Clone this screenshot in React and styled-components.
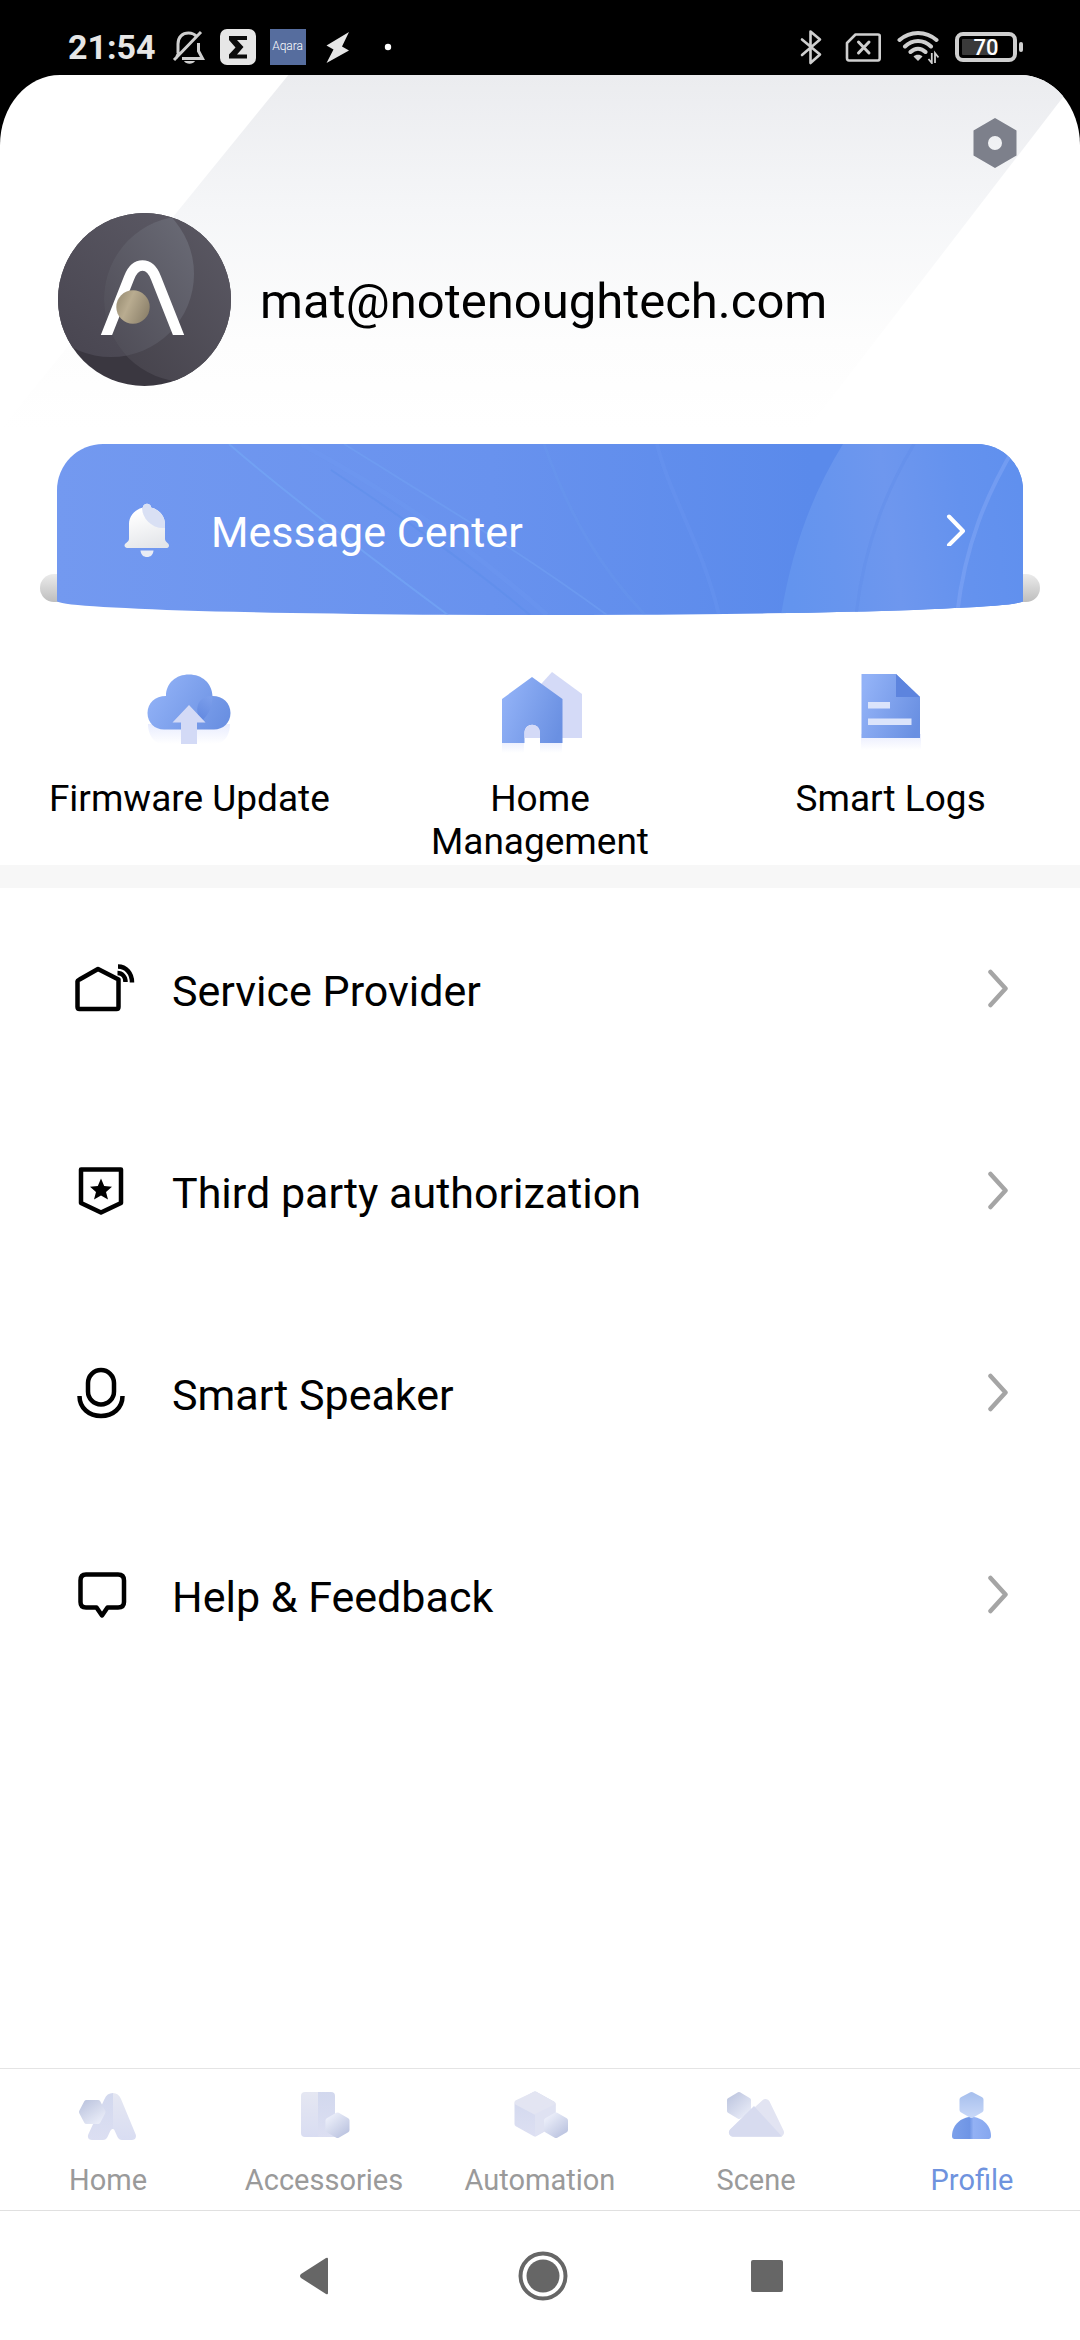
import React from 'react';
import styled, { createGlobalStyle } from 'styled-components';

const menus = [
    { id: "provider", text: "Service Provider", icon: <ProviderIcon /> },
    { id: "third", text: "Third party authorization", icon: <ShieldIcon /> },
    { id: "speaker", text: "Smart Speaker", icon: <MicIcon /> },
    { id: "help", text: "Help & Feedback", icon: <BubbleIcon /> },
];

const shortcuts = [
    { id: "firmware", text: "Firmware Update", icon: <CloudIcon /> },
    { id: "home", text: "Home Management", icon: <HousesIcon /> },
    { id: "logs", text: "Smart Logs", icon: <LogsIcon /> },
];

const tabs = [
    { id: "home", text: "Home", icon: <TabHome /> },
    { id: "accessories", text: "Accessories", icon: <TabAccessories /> },
    { id: "automation", text: "Automation", icon: <TabAutomation /> },
    { id: "scene", text: "Scene", icon: <TabScene /> },
    { id: "profile", text: "Profile", icon: <TabProfile /> },
];

const App = () => {
    const [tab, setTab] = React.useState("profile");

    return (
        <Page>
            <GlobalStyle />
            <StatusBar />
            <Sheet>
                <Header>
                    <SettingsButton aria-label="Settings">
                        <svg width="44" height="50" viewBox="0 0 44 50">
                            <path fill="#7d808b" fillRule="evenodd" d="M22 0L43.500 12.500V37.500L22 50L.5 37.500V12.500ZM22 18a7 7 0 1 0 0 14a7 7 0 1 0 0-14Z" />
                        </svg>
                    </SettingsButton>
                    <Account>
                        <Avatar />
                        <Email>mat@notenoughtech.com</Email>
                    </Account>
                </Header>

                <Banner>
                    <MessageCard href="#messages">
                        <CardArt />
                        <BellIcon />
                        <RowText>Message Center</RowText>
                        <svg width="20" height="32" viewBox="0 0 20 32" fill="none" stroke="#fff" strokeWidth="4" strokeLinecap="round" strokeLinejoin="round">
                            <path d="M3 2.500L17 17L3 31" />
                        </svg>
                    </MessageCard>
                </Banner>

                <Shortcuts>
                    {shortcuts.map((s) => (
                        <Shortcut key={s.id} href={"#" + s.id}>
                            {s.icon}
                            <span>{s.text}</span>
                        </Shortcut>
                    ))}
                </Shortcuts>

                <MenuList>
                    {menus.map((m) => (
                        <li key={m.id}>
                            <MenuLink href={"#" + m.id}>
                                {m.icon}
                                <RowText>{m.text}</RowText>
                                <svg width="22" height="40" viewBox="0 0 22 40" fill="none" stroke="#a5a5a5" strokeWidth="4.500" strokeLinecap="round" strokeLinejoin="round">
                                    <path d="M4.500 3L19.500 19.500L4.500 36" />
                                </svg>
                            </MenuLink>
                        </li>
                    ))}
                </MenuList>

                <TabBar>
                    {tabs.map((t) => (
                        <TabButton key={t.id} $active={t.id === tab} onClick={() => setTab(t.id)}>
                            {t.icon}
                            {t.text}
                        </TabButton>
                    ))}
                </TabBar>
                <SystemNav />
            </Sheet>
        </Page>
    )
}

export default App;

function StatusBar() {
    return (
        <Status>
            <StatusGroup>
                <Clock>21:54</Clock>
                <svg width="36" height="36" viewBox="0 0 36 36" fill="none" stroke="#cfcfcf" strokeWidth="3">
                    <path d="M8 24V15C8 8 12.500 4 18.500 4C22 4 25 5.500 27 8M28.500 14V22L32.500 29.500H12M6 29.500L8.500 24M4 31L31 3" />
                    <path d="M14 32H25C23 35.500 16 35.500 14 32Z" fill="#cfcfcf" stroke="none" />
                </svg>
                <svg width="36" height="36" viewBox="0 0 36 36">
                    <rect width="36" height="36" rx="7" fill="#e6e6e6" />
                    <path fill="#0c0c0c" d="M9 7H27V11H17L23.500 18L17 25.500H27V29.500H9V25.500L15.500 18.500L9 11Z" />
                </svg>
                <AppBadge>Aqara</AppBadge>
                <svg width="36" height="36" viewBox="0 0 36 36">
                    <path fill="#e6e6e6" d="M29 3L6.500 16.500L13.500 20.500L6.500 34L29 21.500L22 17.500Z" />
                </svg>
                <svg width="36" height="36" viewBox="0 0 36 36">
                    <circle cx="18" cy="18" r="3.200" fill="#fff" />
                </svg>
            </StatusGroup>
            <StatusGroup $gap={16}>
                <svg width="36" height="36" viewBox="0 0 36 36" fill="none" stroke="#cfcfcf" strokeWidth="2.600" strokeLinejoin="round" strokeLinecap="round">
                    <path d="M9 10.500L27 25.500L17.500 34V2.500L27 10.500L9 26" />
                </svg>
                <svg width="36" height="30" viewBox="0 0 36 30" fill="none" stroke="#cfcfcf" strokeWidth="2.600" strokeLinejoin="round" strokeLinecap="round">
                    <path d="M10.500 2.500H33C34 2.500 34.700 3 34.700 4V26C34.700 27.500 34 28.500 33 28.500H4C2.500 28.500 2 27.500 2 26V11Z" />
                    <path strokeWidth="3" d="M13.500 10L24 21M24 10L13.500 21" />
                </svg>
                <svg width="42" height="34" viewBox="0 0 42 34" fill="none" stroke="#cfcfcf" strokeWidth="4" strokeLinecap="round">
                    <path d="M2.500 10C13 .5 29 .5 39.500 10M8 16.500C15.500 9 26.500 9 34 16.500M13.500 22C18 17.500 24 17.500 28.500 22" />
                    <path fill="#cfcfcf" stroke="none" d="M16.500 26.500C18.500 24 23.500 24 25.500 26.500L21 31Z" />
                    <path strokeWidth="1.800" strokeLinecap="butt" d="M34.800 23V33L31.500 29M38 33V23L41.500 27.500" />
                </svg>
                <BatteryWrap>
                    <Battery>70</Battery>
                    <BatteryTip />
                </BatteryWrap>
            </StatusGroup>
        </Status>
    )
}

function SystemNav() {
    return (
        <NavKeys>
            <KeyButton aria-label="Back">
                <svg width="52" height="52" viewBox="0 0 52 52" fill="#666">
                    <path d="M38 9V43Q38 45 36 44L11 28Q9 26 11 24L36 8Q38 7 38 9Z" />
                </svg>
            </KeyButton>
            <KeyButton aria-label="Home">
                <svg width="52" height="52" viewBox="0 0 52 52" fill="#666">
                    <circle cx="27" cy="26" r="22.500" fill="none" stroke="#666" strokeWidth="4" />
                    <circle cx="27" cy="26" r="16.500" />
                </svg>
            </KeyButton>
            <KeyButton aria-label="Recent apps">
                <svg width="52" height="52" viewBox="0 0 52 52" fill="#666">
                    <rect x="9" y="10" width="32" height="32" rx="2" />
                </svg>
            </KeyButton>
        </NavKeys>
    )
}

function Avatar() {
    return (
        <svg width="173" height="173" viewBox="0 0 173 173">
            <defs>
                <linearGradient id="avLeft" x1="1" y1="0" x2="0.200" y2="1">
                    <stop offset="0" stopColor="#5d5b66" />
                    <stop offset="1" stopColor="#484550" />
                </linearGradient>
                <linearGradient id="avRight" x1="1" y1="0.200" x2="0.100" y2="0.900">
                    <stop offset="0" stopColor="#5d5b66" />
                    <stop offset="1" stopColor="#46434c" />
                </linearGradient>
                <linearGradient id="avBoth" x1="0.700" y1="0.200" x2="0" y2="0.700">
                    <stop offset="0" stopColor="#6b6c77" />
                    <stop offset="1" stopColor="#504e58" />
                </linearGradient>
                <linearGradient id="avGold" x1="0.100" y1="0.300" x2="1" y2="0.700">
                    <stop offset="0" stopColor="#a3977c" />
                    <stop offset="0.300" stopColor="#b9ac90" />
                    <stop offset="1" stopColor="#8b806a" />
                </linearGradient>
                <clipPath id="avRound"><circle cx="86.500" cy="86.500" r="86.500" /></clipPath>
                <clipPath id="avInner"><circle cx="53" cy="61" r="83" /></clipPath>
                <clipPath id="avLegs"><rect width="173" height="122" /></clipPath>
            </defs>
            <g clipPath="url(#avRound)">
                <rect width="173" height="173" fill="#3a3740" />
                <circle cx="53" cy="61" r="83" fill="url(#avLeft)" />
                <circle cx="129" cy="86" r="83" fill="url(#avRight)" />
                <g clipPath="url(#avInner)">
                    <circle cx="129" cy="86" r="83" fill="url(#avBoth)" />
                </g>
            </g>
            <path clipPath="url(#avLegs)" d="M44.500 132L71 65C74 57 78 52.500 84.500 52.500S95 57 98 65L124.500 132" fill="none" stroke="#fff" strokeWidth="10.500" />
            <circle cx="75" cy="94" r="16.700" fill="url(#avGold)" />
        </svg>
    )
}

function CardArt() {
    return (
        <Art viewBox="0 0 966 171" preserveAspectRatio="xMaxYMid slice" fill="none">
            <defs>
                <linearGradient id="artWave" x1="0" x2="1" y1="0.500" y2="0.400">
                    <stop offset="0" stopColor="#6394ee" />
                    <stop offset="0.200" stopColor="#6795ee" />
                    <stop offset="0.450" stopColor="#6e97ee" />
                    <stop offset="0.750" stopColor="#6492ee" />
                    <stop offset="1" stopColor="#6090ee" />
                </linearGradient>
            </defs>
            <path fill="url(#artWave)" d="M786 0C755 50 735 105 724 171H966V0Z" />
            <path stroke="#628eea" strokeWidth="3" opacity="0.500" d="M857 0C832 42 808 95 799 171" />
            <path stroke="#83a8f5" strokeWidth="4" opacity="0.500" d="M957 4C930 50 908 100 900 171" />
            <path stroke="#73a5f5" strokeWidth="2" opacity="0.700" d="M172 0C220 42 290 96 391 171" />
            <path stroke="#71a2f4" strokeWidth="2" opacity="0.500" d="M287 0C370 52 460 105 550 171" />
            <path stroke="#5b8be8" strokeWidth="2" opacity="0.400" d="M274 26C340 70 410 118 473 171" />
            <path stroke="#709df3" strokeWidth="5" opacity="0.250" d="M244 0C330 46 410 100 490 171" />
            <path stroke="#70a0f2" strokeWidth="3" opacity="0.200" d="M487 0C512 70 540 120 588 171" />
            <path stroke="#6e9cf2" strokeWidth="4" opacity="0.250" d="M600 0C612 50 645 100 662 171" />
        </Art>
    )
}

function BellIcon() {
    return (
        <svg width="46" height="54" viewBox="0 0 46 54">
            <defs>
                <linearGradient id="bell" x1="0.200" y1="0" x2="0.500" y2="1">
                    <stop offset="0.200" stopColor="#fff" />
                    <stop offset="1" stopColor="#e4e6ea" />
                </linearGradient>
                <clipPath id="bellShape">
                    <path d="M19 4.500C19 -.5 27 -.5 27 4.500C36 6.500 41 14 41 21V36C41 39 45 40 45 42.500C45 44 44 45 43 45H3C2 45 .5 44 .5 42.500C.5 40 5 39 5 36V21C5 14 10 6.500 19 4.500Z" />
                </clipPath>
            </defs>
            <g clipPath="url(#bellShape)">
                <rect width="46" height="46" fill="url(#bell)" />
                <circle cx="39" cy="4" r="21" fill="#d9e0f4" />
            </g>
            <path fill="#e9ecf5" d="M16.500 47.500H29.500C29 52 26.500 54 23 54S17 52 16.500 47.500Z" />
        </svg>
    )
}

function CloudIcon() {
    return (
        <svg width="96" height="96" viewBox="0 0 96 96">
            <defs>
                <linearGradient id="blue" x1="0" y1="0.300" x2="1" y2="0.700">
                    <stop offset="0" stopColor="#92b2f7" />
                    <stop offset="1" stopColor="#6a90e2" />
                </linearGradient>
                <linearGradient id="deep" x1="0.800" y1="0" x2="0.300" y2="1">
                    <stop offset="0" stopColor="#7fa1ec" />
                    <stop offset="1" stopColor="#5b82dd" />
                </linearGradient>
                <linearGradient id="glow" x1="0" y1="0" x2="0" y2="1">
                    <stop offset="0" stopColor="#e8ecfe" />
                    <stop offset="1" stopColor="#fff" />
                </linearGradient>
            </defs>
            <path fill="url(#glow)" d="M7 64H89C89 74 84 84 73 84H23C12 84 7 74 7 64Z" />
            <path fill="url(#blue)" d="M25 36C25 23 35 14.500 48 14.500S71 23 71.500 36C82 36 89.500 43 89.500 53S82 69.500 73 69.500H23C14 69.500 6.500 63 6.500 53S14 36 25 36Z" />
            <path fill="url(#deep)" opacity="0.700" d="M71.500 36C71.500 46 68 54 61 61C55 56 55 46 59 41C62 37.500 66 36 71.500 36Z" />
            <path fill="#d3daf6" d="M48 45L64.500 62.500H56V84H40V62.500H31.500Z" />
        </svg>
    )
}

function HousesIcon() {
    return (
        <svg width="96" height="96" viewBox="0 0 96 96">
            <path fill="url(#glow)" d="M10 80H32V93H10ZM48 80H70V93H48Z" />
            <path fill="#d4daf7" d="M60 12L90 34V78H40V34Z" />
            <path fill="url(#blue)" d="M40 17L70.500 39V83H48V73C48 62 32.500 62 32.500 73V83H10V39Z" />
            <path fill="#d4daf7" d="M32.500 78V73C32.500 62 48 62 48 73V78Z" />
        </svg>
    )
}

function LogsIcon() {
    return (
        <svg width="96" height="96" viewBox="0 0 96 96">
            <rect x="18" y="74" width="60" height="16" fill="url(#glow)" />
            <path fill="url(#blue)" d="M18.500 14H53L77 37V78H18.500Z" />
            <path fill="#5d84de" d="M53 14L77 37H53Z" />
            <path fill="#dbe4fb" d="M25 42H47V48.500H25ZM25 58.500H68.500V65H25Z" />
        </svg>
    )
}

function ProviderIcon() {
    return (
        <MenuGlyph viewBox="0 0 66 66">
            <path d="M10.500 23.500L29 13L49.500 23.500V51Q49.500 53 47.500 53H10.500Q8.500 53 8.500 51V25Q8.500 24.500 10.500 23.500Z" />
            <path strokeLinecap="butt" d="M49 10.500C57 10.500 63 17 63 26.500M48.500 17C53 17 56.500 20.500 56.500 26" />
        </MenuGlyph>
    )
}

function ShieldIcon() {
    return (
        <MenuGlyph viewBox="0 0 66 66">
            <path d="M12 11.500H52V45L32 54.500L12 45Z" />
            <path fill="#000" stroke="none" d="M32 20.500L35.200 28L43 28.700L37 34L39 41.500L32 37.500L25 41.500L27 34L21 28.700L28.800 28Z" />
        </MenuGlyph>
    )
}

function MicIcon() {
    return (
        <MenuGlyph viewBox="0 0 66 66">
            <rect x="19" y="10" width="26" height="34.500" rx="13" />
            <path strokeLinecap="butt" d="M10.500 36C10.500 48 20 56 32 56S53.500 48 53.500 36" />
        </MenuGlyph>
    )
}

function BubbleIcon() {
    return (
        <MenuGlyph viewBox="0 0 66 66">
            <path d="M17 12.500H49Q55 12.500 55 18.500V40Q55 45.500 49 45.500H38.500L33 53.500L27.500 45.500H17Q11.500 45.500 11.500 40V18.500Q11.500 12.500 17 12.500Z" />
        </MenuGlyph>
    )
}

function TabHome() {
    return (
        <svg width="66" height="66" viewBox="0 0 66 66">
            <defs>
                <linearGradient id="pale" x1="0" y1="0" x2="0" y2="1">
                    <stop offset="0" stopColor="#d2d8ee" />
                    <stop offset="1" stopColor="#dcdff2" />
                </linearGradient>
                <linearGradient id="paler" x1="0" y1="0" x2="0" y2="1">
                    <stop offset="0" stopColor="#e5e7f2" />
                    <stop offset="1" stopColor="#d9ddf2" />
                </linearGradient>
                <linearGradient id="hexLeft" x1="0.100" y1="0" x2="0.900" y2="1">
                    <stop offset="0" stopColor="#bfc7e0" />
                    <stop offset="1" stopColor="#e9ecf8" />
                </linearGradient>
                <linearGradient id="hexRight" x1="0.100" y1="0" x2="0.900" y2="1">
                    <stop offset="0" stopColor="#eceffa" />
                    <stop offset="1" stopColor="#bcc4e0" />
                </linearGradient>
            </defs>
            <path fill="url(#pale)" d="M38 10C34 10 31 12 29.500 16L13.500 51C12 54 13.500 57 17 57H28C30 57 31.500 56 32.500 54L35 48.500C36 46.500 37 46 38 46Z" />
            <path fill="url(#paler)" d="M38 10C41.500 10 44.500 12 46 16L60.500 51C62 54 60 57 57 57H47C45 57 43.500 56 42.500 54L40 48.500C39.500 47 39 46 38 46Z" />
            <path fill="url(#hexLeft)" stroke="url(#hexLeft)" strokeWidth="5" strokeLinejoin="round" d="M6.500 29L11.500 19.500H23L28 29L23 38.500H11.500Z" />
        </svg>
    )
}

function TabAccessories() {
    return (
        <svg width="66" height="66" viewBox="0 0 66 66">
            <path fill="url(#paler)" d="M27 9H14Q10 9 10 13V50Q10 54 14 54H27Z" />
            <path fill="url(#pale)" d="M27 9H40Q44 9 44 13V54H27Z" />
            <path fill="url(#hexRight)" stroke="url(#hexRight)" strokeWidth="5" strokeLinejoin="round" d="M46.500 32L56 37.500V47L46.500 52.500L37 47V37.500Z" />
        </svg>
    )
}

function TabAutomation() {
    return (
        <svg width="66" height="66" viewBox="0 0 66 66">
            <path fill="url(#pale)" stroke="url(#pale)" strokeWidth="5" strokeLinejoin="round" d="M28 11L46 21V41L28 51L10 41V21Z" />
            <path fill="#e3e5f2" stroke="#e3e5f2" strokeWidth="5" strokeLinejoin="round" d="M28 11L46 21L28 29L10 19.500Z" />
            <path fill="#dfe2f2" d="M28 31L48.500 21V42L28 53.500Z" />
            <path fill="url(#hexRight)" stroke="url(#hexRight)" strokeWidth="5" strokeLinejoin="round" d="M49 32L58.500 37.500V47L49 52.500L39.500 47V37.500Z" />
        </svg>
    )
}

function TabScene() {
    return (
        <svg width="66" height="66" viewBox="0 0 66 66">
            <path fill="url(#hexLeft)" stroke="url(#hexLeft)" strokeWidth="4" strokeLinejoin="round" d="M16 11L26 17V28L16 34L6 28V17Z" />
            <path fill="#e2e4f2" stroke="#e2e4f2" strokeWidth="9" strokeLinejoin="round" d="M42.500 20.500L56.500 49.500H10.500Z" />
            <path fill="#d7dbef" d="M31 23L59 53.500H10C6 53 4.500 49 7.500 46Z" />
        </svg>
    )
}

function TabProfile() {
    return (
        <svg width="66" height="66" viewBox="0 0 66 66">
            <defs>
                <linearGradient id="face" x1="0" y1="0" x2="0" y2="1">
                    <stop offset="0" stopColor="#a9c1ee" />
                    <stop offset="1" stopColor="#c6d6f7" />
                </linearGradient>
                <linearGradient id="torso" x1="0" y1="0" x2="1" y2="0">
                    <stop offset="0" stopColor="#7ca0ea" />
                    <stop offset="0.450" stopColor="#6f95e5" />
                    <stop offset="0.550" stopColor="#93b1f4" />
                    <stop offset="1" stopColor="#86a7ef" />
                </linearGradient>
            </defs>
            <path fill="url(#torso)" d="M32.500 34C43 34 52 42 52 53Q52 56 49.500 56H15.500Q13 56 13 53C13 42 22 34 32.500 34Z" />
            <path fill="url(#face)" stroke="url(#face)" strokeWidth="5" strokeLinejoin="round" d="M32.500 11.500L42 16.500V27L32.500 32.500L23 27V16.500Z" />
        </svg>
    )
}

const GlobalStyle = createGlobalStyle`
    * {
        box-sizing: border-box;
    }
    body {
        margin: 0;
        background: #000;
        font-family: Roboto, "Liberation Sans", sans-serif;
    }
    a {
        color: inherit;
        text-decoration: none;
    }
    button {
        border: none;
        padding: 0;
        background: none;
        font-family: inherit;
        cursor: pointer;
    }
    svg {
        display: block;
        flex-shrink: 0;
    }
`

const Page = styled.div`
    display: flex;
    flex-direction: column;
    min-height: 100vh;
`

const Status = styled.div`
    display: flex;
    justify-content: space-between;
    align-items: center;
    height: 75px;
    padding: 19px 57px 0 68px;
`

const StatusGroup = styled.div`
    display: flex;
    align-items: center;
    gap: ${(props) => props.$gap || 14}px;
`

const Clock = styled.span`
    color: #e6e6e6;
    font-size: 34px;
    font-weight: 700;
    line-height: 40px;
`

const AppBadge = styled.span`
    width: 36px;
    height: 36px;
    background: #566d9e;
    color: #fff;
    font-size: 12px;
    font-weight: 300;
    line-height: 34px;
    text-align: center;
`

const BatteryWrap = styled.div`
    display: flex;
    align-items: center;
    gap: 2px;
`

const Battery = styled.div`
    width: 62px;
    height: 30px;
    border: 4px solid #cfcfcf;
    border-radius: 8px;
    background: linear-gradient(90deg, #3a3a3a 70%, #000 70%) content-box;
    padding: 3px;
    color: #fff;
    font-size: 22px;
    font-weight: 500;
    line-height: 17px;
    text-align: center;
`

const BatteryTip = styled.div`
    width: 4px;
    height: 10px;
    border-radius: 2px;
    background: #cfcfcf;
`

const Sheet = styled.main`
    position: relative;
    display: flex;
    flex-direction: column;
    flex: 1;
    overflow: hidden;
    border-radius: 60px 60px 0 0 / 70px 70px 0 0;
    background: #fff;

    /* slanted grey beam behind the account */
    &::before {
        content: "";
        position: absolute;
        inset: 0 0 auto;
        height: 355px;
        background: linear-gradient(#ebecef, #f5f6f8 38%, #fdfdfd 75%, #fff);
        clip-path: polygon(26.7% 0, 100% 0, 74.7% 100%, 0 100%);
    }
`

const Header = styled.header`
    position: relative;
    display: flex;
    flex-direction: column;
    gap: 45px;
    padding: 43px 63px 58px 58px;
`

const SettingsButton = styled.button`
    align-self: flex-end;
`

const Account = styled.div`
    display: flex;
    align-items: center;
    gap: 29px;
`

const Email = styled.h1`
    margin: 0;
    padding-top: 4px;
    font-size: 49px;
    font-weight: 400;
    line-height: 58px;
`

const Banner = styled.div`
    position: relative;
    padding: 0 57px;

    &::before {
        content: "";
        position: absolute;
        left: 40px;
        right: 40px;
        bottom: 13px;
        height: 28px;
        border-radius: 14px;
        background: linear-gradient(#ebebeb, #bebebe);
    }
`

const MessageCard = styled.a`
    position: relative;
    display: flex;
    align-items: center;
    gap: 41px;
    height: 171px;
    padding: 0 57px 0 67px;
    overflow: hidden;
    border-radius: 46px 46px 50% 50% / 46px 46px 14px 14px;
    background: linear-gradient(90deg, #7399f0, #6892ee 45%, #5a8aeb 78%);
    color: #fff;

    & > * {
        position: relative;
    }
`

const Art = styled.svg`
    && {
        position: absolute;
        inset: 0;
        width: 100%;
        height: 100%;
    }
`

const RowText = styled.span`
    flex: 1;
    padding-top: 4px;
    font-size: 43px;
    line-height: 52px;
`

const Shortcuts = styled.nav`
    display: grid;
    grid-template-columns: repeat(3, 1fr);
    padding: 45px 14px 2px;
`

const Shortcut = styled.a`
    display: flex;
    flex-direction: column;
    align-items: center;
    gap: 21px;
    padding: 0 24px;
    font-size: 37px;
    line-height: 43px;
    text-align: center;
`

const MenuList = styled.ul`
    flex: 1;
    margin: 0;
    padding: 0;
    border-top: 23px solid #f7f7f7;
    list-style: none;
`

const MenuLink = styled.a`
    display: flex;
    align-items: center;
    gap: 37px;
    height: 202px;
    padding: 0 72px 0 69px;
`

const MenuGlyph = styled.svg`
    width: 66px;
    height: 66px;
    fill: none;
    stroke: #000;
    stroke-width: 4.5px;
    stroke-linejoin: round;
    stroke-linecap: round;
`

const TabBar = styled.nav`
    display: grid;
    grid-template-columns: repeat(5, 1fr);
    border-top: 1px solid #e4e4e4;
    padding: 14px 0 13px;
`

const TabButton = styled.button`
    display: flex;
    flex-direction: column;
    align-items: center;
    gap: 14px;
    color: ${(props) => (props.$active ? "#6f93de" : "#9a9a9a")};
    font-size: 29px;
    line-height: 34px;
`

const NavKeys = styled.div`
    display: grid;
    grid-template-columns: repeat(3, 226px);
    justify-content: center;
    align-items: center;
    height: 130px;
    border-top: 1px solid #e0e0e0;
    padding-left: 4px;
`

const KeyButton = styled.button`
    display: flex;
    justify-content: center;
`
